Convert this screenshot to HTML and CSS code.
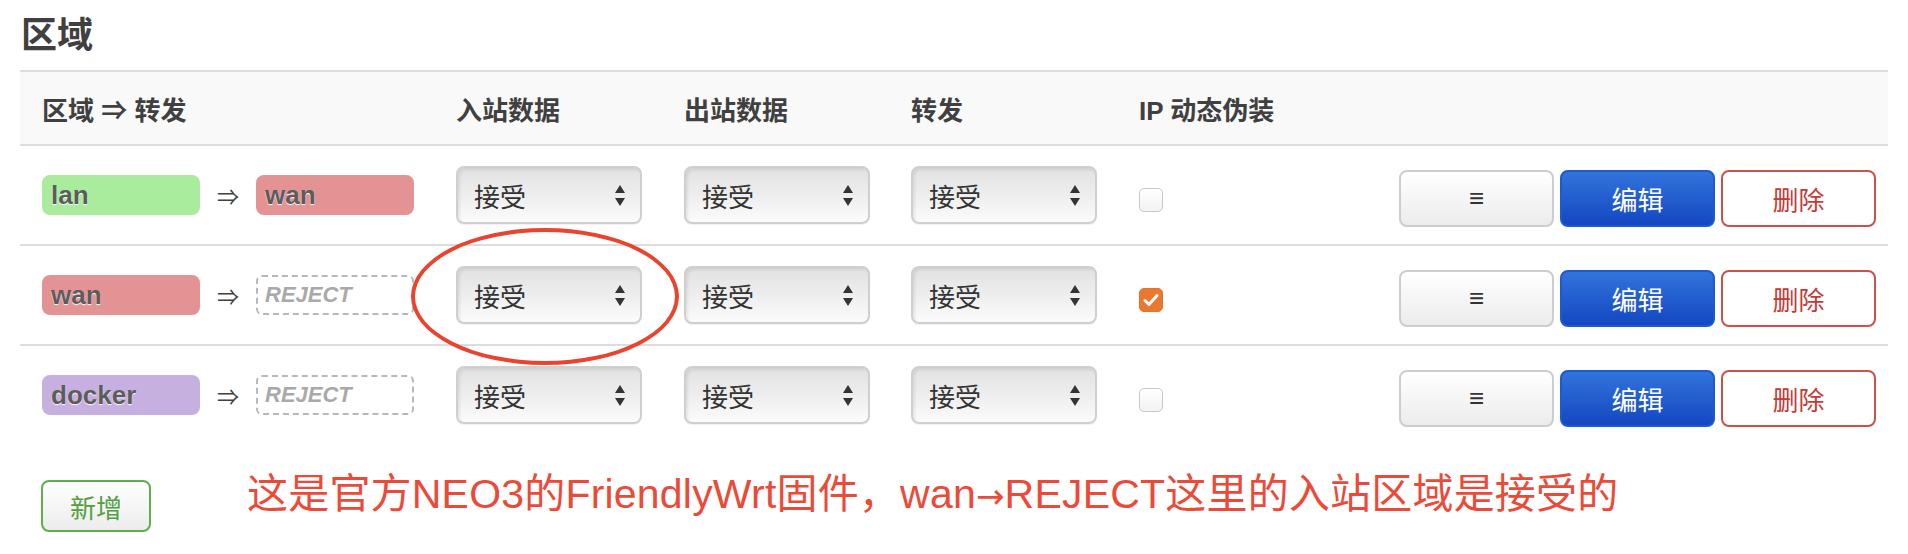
FILE: index.html
```html
<!DOCTYPE html>
<html lang="zh-CN">
<head>
<meta charset="UTF-8">
<title>区域</title>
<link rel="stylesheet" href="styles.css">
</head>
<body>
<div class="page">
    <h2 class="section-title">区域</h2>
    <table class="zone-table">
        <colgroup>
            <col style="width:414px">
            <col style="width:228px">
            <col style="width:227px">
            <col style="width:228px">
            <col>
            <col style="width:520px">
        </colgroup>
        <thead>
            <tr>
                <th>区域 ⇒ 转发</th>
                <th>入站数据</th>
                <th>出站数据</th>
                <th>转发</th>
                <th>IP 动态伪装</th>
                <th></th>
            </tr>
        </thead>
        <tbody>
            <tr>
                <td>
                    <div class="fwd">
                        <span class="zone lan">lan</span>
                        <span class="arrow">⇒</span>
                        <span class="zone wan">wan</span>
                    </div>
                </td>
                <td><div class="select"><span>接受</span><svg width="10" height="21" viewBox="0 0 10 21"><path d="M5 0L10 8H0zM0 13h10L5 21z" fill="#333"/></svg></div></td>
                <td><div class="select"><span>接受</span><svg width="10" height="21" viewBox="0 0 10 21"><path d="M5 0L10 8H0zM0 13h10L5 21z" fill="#333"/></svg></div></td>
                <td><div class="select"><span>接受</span><svg width="10" height="21" viewBox="0 0 10 21"><path d="M5 0L10 8H0zM0 13h10L5 21z" fill="#333"/></svg></div></td>
                <td><span class="check"></span></td>
                <td class="btns">
                    <button class="btn btn-menu">≡</button><button class="btn btn-edit">编辑</button><button class="btn btn-del">删除</button>
                </td>
            </tr>
            <tr>
                <td>
                    <div class="fwd">
                        <span class="zone wan">wan</span>
                        <span class="arrow">⇒</span>
                        <span class="zone reject">REJECT</span>
                    </div>
                </td>
                <td><div class="select"><span>接受</span><svg width="10" height="21" viewBox="0 0 10 21"><path d="M5 0L10 8H0zM0 13h10L5 21z" fill="#333"/></svg></div></td>
                <td><div class="select"><span>接受</span><svg width="10" height="21" viewBox="0 0 10 21"><path d="M5 0L10 8H0zM0 13h10L5 21z" fill="#333"/></svg></div></td>
                <td><div class="select"><span>接受</span><svg width="10" height="21" viewBox="0 0 10 21"><path d="M5 0L10 8H0zM0 13h10L5 21z" fill="#333"/></svg></div></td>
                <td><span class="check on"><svg width="22" height="22" viewBox="0 0 22 22"><path d="M5 11.5l4 4 8-9" fill="none" stroke="#fff" stroke-width="3" stroke-linecap="round" stroke-linejoin="round"/></svg></span></td>
                <td class="btns">
                    <button class="btn btn-menu">≡</button><button class="btn btn-edit">编辑</button><button class="btn btn-del">删除</button>
                </td>
            </tr>
            <tr>
                <td>
                    <div class="fwd">
                        <span class="zone docker">docker</span>
                        <span class="arrow">⇒</span>
                        <span class="zone reject">REJECT</span>
                    </div>
                </td>
                <td><div class="select"><span>接受</span><svg width="10" height="21" viewBox="0 0 10 21"><path d="M5 0L10 8H0zM0 13h10L5 21z" fill="#333"/></svg></div></td>
                <td><div class="select"><span>接受</span><svg width="10" height="21" viewBox="0 0 10 21"><path d="M5 0L10 8H0zM0 13h10L5 21z" fill="#333"/></svg></div></td>
                <td><div class="select"><span>接受</span><svg width="10" height="21" viewBox="0 0 10 21"><path d="M5 0L10 8H0zM0 13h10L5 21z" fill="#333"/></svg></div></td>
                <td><span class="check"></span></td>
                <td class="btns">
                    <button class="btn btn-menu">≡</button><button class="btn btn-edit">编辑</button><button class="btn btn-del">删除</button>
                </td>
            </tr>
        </tbody>
    </table>
    <div class="actions">
        <button class="btn btn-add">新增</button>
        <p class="note">这是官方NEO3的FriendlyWrt固件，wan<span class="note-arrow">→</span>REJECT这里的入站区域是接受的</p>
    </div>
    <!-- annotation ring around wan input -->
    <div class="ring"></div>
</div>
</body>
</html>
```

FILE: styles.css
```css
/* zones page */
body {
    margin: 0;
    background: #fff;
    color: #404040;
    font-family: "Liberation Sans", "Noto Sans CJK SC", sans-serif;
}
.page {
    position: relative;
    padding: 18px 20px 0;
}
.section-title {
    margin: 0 0 16px 1px;
    font-size: 36px;
    line-height: 36px;
    font-weight: bold;
}

.zone-table {
    width: 100%;
    border-collapse: collapse;
    table-layout: fixed;
}
.zone-table tr {
    border-top: 2px solid #ddd;
}
.zone-table th,
.zone-table td {
    padding: 0 0 0 22px;
    text-align: left;
    vertical-align: middle;
}
.zone-table thead tr {
    background: #f9f9f9;
}
.zone-table th {
    height: 72px;
    font-size: 26px;
    font-weight: bold;
    white-space: nowrap;
}
.zone-table td {
    height: 98px;
}

.fwd {
    display: flex;
    align-items: center;
}
.zone {
    display: block;
    width: 158px;
    height: 40px;
    box-sizing: border-box;
    padding-left: 9px;
    border-radius: 8px;
    font-size: 26px;
    font-weight: bold;
    line-height: 40px;
    color: #5c5c5c;
    text-shadow: 0 1px 1px #fff;
}
.lan { background: #a9ec9d; }
.wan { background: #e39393; }
.docker { background: #c6b0df; }
.zone.reject {
    border: 2px dashed #b8b8b8;
    background: #fff;
    padding-left: 7px;
    line-height: 36px;
    font-size: 22px;
    font-style: italic;
    color: #a9a9a9;
    text-shadow: none;
    border-radius: 6px;
}
.arrow {
    width: 56px;
    text-align: center;
    font-size: 22px;
    color: #404040;
}

.select {
    display: flex;
    align-items: center;
    justify-content: space-between;
    width: 186px;
    height: 58px;
    box-sizing: border-box;
    padding: 0 15px 0 16px;
    border: 2px solid #cfcfcf;
    border-radius: 8px;
    background: linear-gradient(#e2e2e2, #efefef 55%, #fbfbfb);
    box-shadow: inset 2px 2px 3px rgba(0, 0, 0, 0.08), 0 1px 1px rgba(0, 0, 0, 0.06);
    font-size: 26px;
    color: #333;
}

.check {
    display: block;
    width: 24px;
    height: 24px;
    margin-top: 10px;
    box-sizing: border-box;
    border: 1px solid #c8c8c8;
    border-radius: 5px;
    background: linear-gradient(#fff, #f2f2f2);
}
.check.on {
    border-color: #e3722b;
    background: #e8792f;
}
.check svg {
    display: block;
}

.btns {
    text-align: right !important;
    padding-right: 12px !important;
}
.btn {
    width: 155px;
    height: 57px;
    margin: 7px 0 0 6px;
    box-sizing: border-box;
    border: 2px solid #cdcdcd;
    border-radius: 8px;
    background: linear-gradient(#fff, #ececec);
    font-family: inherit;
    font-size: 26px;
    color: #333;
    vertical-align: middle;
    cursor: pointer;
}
.btn-menu {
    font-weight: bold;
}
.btn-edit {
    border-color: #1d59cf;
    background: linear-gradient(#3174dc, #1447c1);
    color: #fff;
}
.btn-del {
    border-color: #c9524c;
    background: #fff;
    color: #c23b35;
}

.actions {
    display: flex;
    align-items: flex-start;
    padding: 30px 0 0 21px;
}
.btn-add {
    width: 110px;
    height: 52px;
    margin: 6px 96px 0 0;
    border-color: #5fae4e;
    color: #53a040;
}
.note {
    margin: 0;
    font-size: 41px;
    line-height: 40px;
    letter-spacing: 0.2px;
    color: #ec4a39;
    white-space: nowrap;
}
.note-arrow {
    font-family: "DejaVu Sans", sans-serif;
    font-size: 34px;
}

.ring {
    position: absolute;
    left: 411px;
    top: 228px;
    width: 268px;
    height: 137px;
    box-sizing: border-box;
    border: 4px solid #e8442f;
    border-radius: 50%;
}
```
